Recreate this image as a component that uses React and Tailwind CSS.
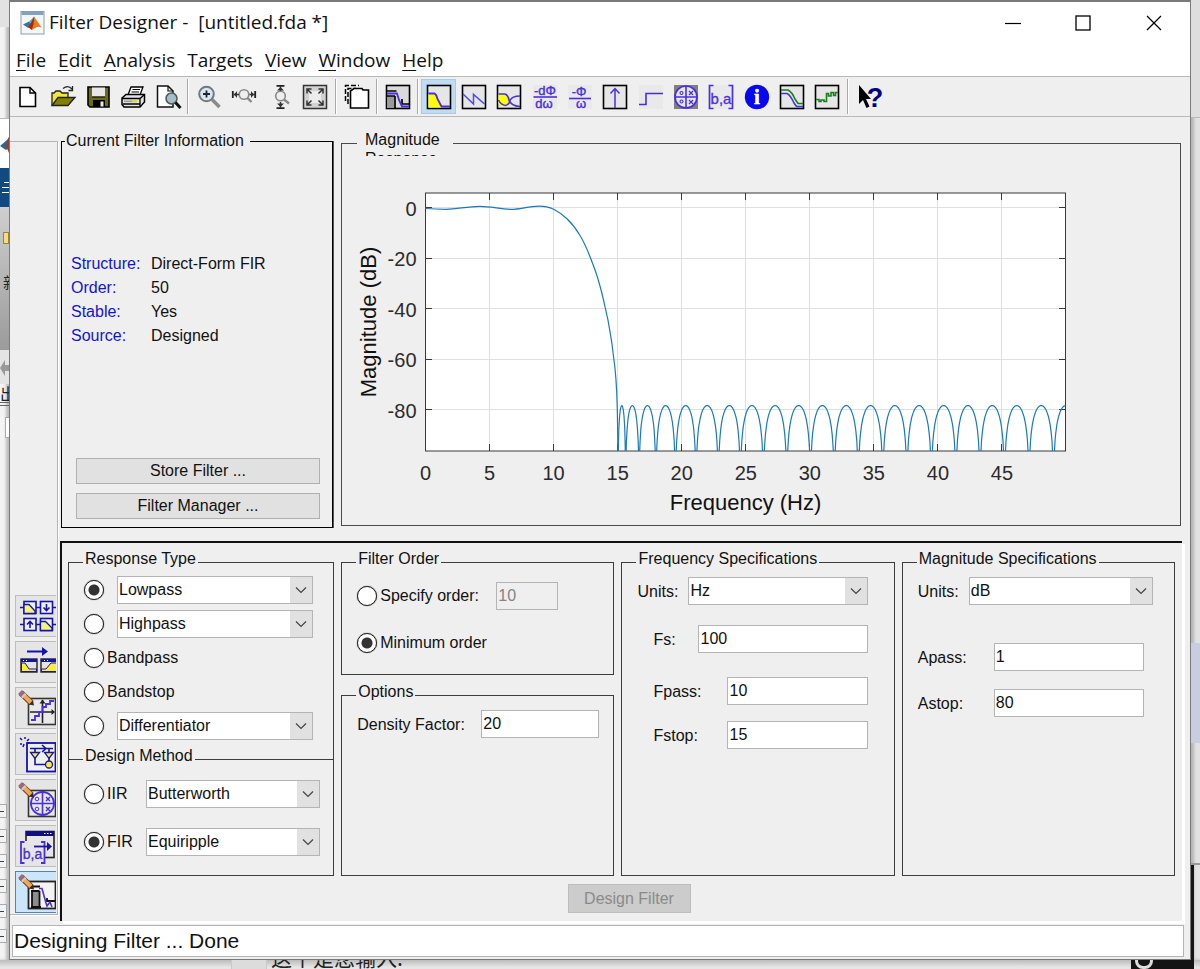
import React from "react";

const UI = 'font-["Liberation_Sans",Arial,sans-serif]';

/* ---------- shared controls ---------- */

function Select({ label, options, className = "" }) {
  return (
    <span className={"relative block h-[28px] " + className}>
      <select
        aria-label={label}
        className="block h-full w-full appearance-none border border-[#b4b4b4] bg-white pl-px text-base leading-5 text-[#111] outline-none"
      >
        {options.map((o) => (
          <option key={o}>{o}</option>
        ))}
      </select>
      <span className="pointer-events-none absolute inset-y-px right-px flex w-[22px] items-center justify-center bg-[#e1e1e1]">
        <svg width="12" height="8" viewBox="0 0 12 8" fill="none" stroke="#444" strokeWidth="1.2">
          <path d="M1 1.5L6 6.5L11 1.5" />
        </svg>
      </span>
    </span>
  );
}

function Radio({ name, id, label, checked }) {
  return (
    <input
      type="radio"
      name={name}
      id={id}
      aria-label={label}
      defaultChecked={checked}
      className="size-5 shrink-0 appearance-none rounded-full border border-[#222] bg-white shadow-[0_0_1px_#333] checked:bg-[radial-gradient(circle,#333_5px,#fff_6px)]"
    />
  );
}

function TextBox({ id, value, disabled, className = "" }) {
  return (
    <input
      id={id}
      type="text"
      defaultValue={value}
      disabled={disabled}
      className={
        "block h-[28px] min-w-0 border border-[#b4b4b4] bg-white pl-px text-base leading-5 text-[#111] outline-none disabled:bg-[#efefef] disabled:text-[#838383] " +
        className
      }
    />
  );
}

function Group({ title, className = "", children }) {
  return (
    <fieldset className={"min-w-0 border border-[#3c3c3c] pl-[15px] " + className}>
      <legend className="-ml-px px-[2px] pb-[6px] text-base leading-4">{title}</legend>
      {children}
    </fieldset>
  );
}

/* ---------- toolbar icons ---------- */

const P = "#4a2fe0";

function Icon({ children }) {
  return (
    <svg width="26" height="26" viewBox="0 0 26 26" fill="none" className="overflow-visible">
      {children}
    </svg>
  );
}

const Frame = ({ fill = "#e6e6e6" }) => (
  <rect x="1.5" y="1.5" width="23" height="23" fill={fill} stroke="#000" strokeWidth="1.6" />
);

const icons = {
  New: (
    <Icon>
      <path d="M5 3.5H15L20.5 9V22.5H5Z" fill="#fff" stroke="#000" strokeWidth="1.6" />
      <path d="M15 3.5V9H20.5" stroke="#000" strokeWidth="1.4" />
    </Icon>
  ),
  Open: (
    <Icon>
      <path d="M2 21V9H4L6 7H10L12 9H18V13" fill="#f3e53a" stroke="#222" strokeWidth="1.3" />
      <path d="M2 21.500L8 13.500H25L18 21.500Z" fill="#808000" stroke="#222" strokeWidth="1.3" />
      <path d="M13 4.500Q18 0.500 22 5M22.500 2V6.500H18.500" stroke="#222" strokeWidth="1.3" />
    </Icon>
  ),
  Save: (
    <Icon>
      <path d="M3 3H24V23H5L3 21Z" fill="#6b6b1a" stroke="#000" strokeWidth="1.6" />
      <rect x="7" y="3.500" width="13" height="9" fill="#e8e8e8" />
      <path d="M7 13H20" stroke="#000" />
      <rect x="8" y="16" width="12" height="7" fill="#000" />
      <rect x="15.500" y="17.500" width="3" height="5" fill="#e8e8e8" />
    </Icon>
  ),
  Print: (
    <Icon>
      <path d="M8 11L11 3H23L20 11" fill="#fff" stroke="#000" strokeWidth="1.3" />
      <path d="M12.500 5.500H20M11.500 8H19" stroke="#000" />
      <path d="M2 14L6 10.500H24.500V18L20 23H4L2 20.500Z" fill="#e4e4e4" stroke="#000" strokeWidth="1.5" />
      <path d="M2 14.500H20L24 11M20 14.500V22.500M3 20H20" stroke="#000" strokeWidth="1.3" />
      <path d="M4 17.300H12" stroke="#999" strokeWidth="1.500" />
      <path d="M12 17.300H17" stroke="#d9d933" strokeWidth="2" />
    </Icon>
  ),
  "Print Preview": (
    <Icon>
      <path d="M2.500 2H13L18 7V23H2.500Z" fill="#fff" stroke="#111" strokeWidth="1.5" />
      <path d="M13 2V7H18" stroke="#111" strokeWidth="1.200" />
      <circle cx="16.500" cy="14.500" r="5.500" fill="#9fc0c8" stroke="#555" strokeWidth="1.5" />
      <path d="M20.500 18.500L25.500 24" stroke="#111" strokeWidth="3" />
    </Icon>
  ),
  "Zoom In": (
    <Icon>
      <circle cx="10.500" cy="10" r="7.300" fill="#d9e6ef" stroke="#707880" strokeWidth="2" />
      <path d="M10.500 6.500V13.500M7 10H14" stroke="#223" strokeWidth="1.800" />
      <path d="M16 15.500L23.500 23" stroke="#8b8b8b" strokeWidth="3.500" />
    </Icon>
  ),
  "Zoom X": (
    <Icon>
      <circle cx="13" cy="10.500" r="4.800" fill="#eee" stroke="#888" strokeWidth="1.600" />
      <path d="M16.500 14L20.500 18" stroke="#888" strokeWidth="2.400" />
      <path d="M1.800 7V14M24.200 7V14" stroke="#222" strokeWidth="1.800" />
      <path d="M2.500 10.500H8M18.500 10.500H24" stroke="#333" strokeWidth="1.400" />
      <path d="M6 7V14L3 10.500ZM20 7V14L23 10.500Z" fill="#333" />
    </Icon>
  ),
  "Zoom Y": (
    <Icon>
      <circle cx="13.500" cy="12" r="4.800" fill="#eee" stroke="#888" strokeWidth="1.600" />
      <path d="M17 15.500L22 19.500" stroke="#888" strokeWidth="2.400" />
      <path d="M9.500 1.800H17.500M9.500 24.200H17.500" stroke="#222" strokeWidth="1.800" />
      <path d="M13.500 2V7M13.500 18V24" stroke="#333" strokeWidth="1.400" />
      <path d="M10 6.500H17L13.500 3ZM10 19.500H17L13.500 23Z" fill="#333" />
    </Icon>
  ),
  "Full View": (
    <Icon>
      <rect x="1.500" y="1.500" width="23" height="23" fill="#d2d2d2" stroke="#333" strokeWidth="1.500" />
      <rect x="7" y="7" width="12" height="12" fill="#ececec" />
      <path
        d="M5 9.500V5H9.500M5 5L9.500 9.500M16.500 5H21V9.500M21 5L16.500 9.500M5 16.500V21H9.500M5 21L9.500 16.500M21 16.500V21H16.500M21 21L16.500 16.500"
        stroke="#333"
        strokeWidth="1.500"
      />
    </Icon>
  ),
  "New Window": (
    <Icon>
      <path d="M1.500 17V1.500H15" stroke="#000" strokeWidth="1.500" strokeDasharray="5 2" />
      <path d="M4 20V4.500H12" stroke="#000" strokeWidth="1.500" strokeDasharray="5 2" />
      <path d="M6.500 7L10 4.500H18L19 6H24.500V24H6.500Z" fill="#fff" stroke="#000" strokeWidth="1.600" />
    </Icon>
  ),
  "Filter Specifications": (
    <Icon>
      <Frame fill="#dadada" />
      <path d="M2 12H9V24H2Z" fill="#9a9a9a" />
      <path d="M2 7H11.500M2 12H10M10 12V24M17 15V20H24" stroke="#000" strokeWidth="1.700" />
      <path d="M2 9.500H12L14 16L17 22.500H24" stroke={P} strokeWidth="1.800" />
    </Icon>
  ),
  "Magnitude Response": (
    <Icon>
      <Frame />
      <path d="M2.500 10H9L16 23.500H2.500Z" fill="#ffff00" />
      <path d="M2.500 9.500H8.500Q10.500 10.500 11.500 15L15.500 22.500H24" stroke={P} strokeWidth="1.800" />
    </Icon>
  ),
  "Phase Response": (
    <Icon>
      <Frame />
      <path d="M2 10L12.500 20V10.500L23.500 20" stroke="#4a4af0" strokeWidth="1.500" />
    </Icon>
  ),
  "Magnitude and Phase Responses": (
    <Icon>
      <Frame />
      <path d="M2.500 10H10Q14 16 14 20L10 22H5L2.500 20Z" fill="#ffff00" />
      <path d="M2.500 10H9Q12 11 13 16Q15 22 24 22.500" stroke={P} strokeWidth="1.700" />
      <path d="M2.500 16Q5 21 9.500 21.500Q13 21 14 16.500Q16 12 24 12" stroke={P} strokeWidth="1.500" />
    </Icon>
  ),
  "Group Delay": (
    <Icon>
      <rect x="1" y="1" width="24" height="24" fill="#e9e9e9" />
      <text x="13" y="10.500" textAnchor="middle" fontSize="13" fill={P} stroke={P} strokeWidth="0.4" fontFamily="Liberation Sans, sans-serif">-dΦ</text>
      <path d="M1.500 13H25" stroke={P} strokeWidth="1.600" />
      <text x="12" y="24" textAnchor="middle" fontSize="13" fill={P} stroke={P} strokeWidth="0.4" fontFamily="Liberation Sans, sans-serif">dω</text>
    </Icon>
  ),
  "Phase Delay": (
    <Icon>
      <rect x="1" y="1" width="24" height="24" fill="#e9e9e9" />
      <text x="12" y="12" textAnchor="middle" fontSize="13" fill={P} stroke={P} strokeWidth="0.4" fontFamily="Liberation Sans, sans-serif">-Φ</text>
      <path d="M2 14.500H24" stroke={P} strokeWidth="1.600" />
      <text x="14" y="23.500" textAnchor="middle" fontSize="13" fill={P} stroke={P} strokeWidth="0.4" fontFamily="Liberation Sans, sans-serif">ω</text>
    </Icon>
  ),
  "Impulse Response": (
    <Icon>
      <Frame />
      <path d="M13 24V5M8.500 9.500L13 4.500L17.500 9.500" stroke={P} strokeWidth="1.500" />
    </Icon>
  ),
  "Step Response": (
    <Icon>
      <rect x="1" y="1" width="24" height="24" fill="#e9e9e9" />
      <path d="M1 20.500H8V9.500H25" stroke={P} strokeWidth="1.600" />
    </Icon>
  ),
  "Pole-Zero Plot": (
    <Icon>
      <rect x="1" y="1" width="24" height="24" fill="#808080" />
      <circle cx="13" cy="13" r="11" fill="#e6e6e6" stroke={P} strokeWidth="1.700" />
      <path d="M13 2V24M2 13H24" stroke={P} strokeWidth="1.600" />
      <path d="M16 7L20 11M20 7L16 11M16 16L20 20M20 16L16 20" stroke={P} strokeWidth="1.200" />
      <circle cx="8.500" cy="9" r="1.500" stroke={P} strokeWidth="1.100" />
      <circle cx="8.500" cy="17.500" r="1.500" stroke={P} strokeWidth="1.100" />
    </Icon>
  ),
  "Filter Coefficients": (
    <Icon>
      <rect x="1" y="1" width="24" height="24" fill="#e9e9e9" />
      <path d="M5.500 1.500H1.500V24.500H5.500M20.500 1.500H24.500V24.500H20.500" stroke={P} strokeWidth="1.700" />
      <text x="13" y="20" textAnchor="middle" fontSize="15" fill={P} stroke={P} strokeWidth="0.300" fontFamily="Liberation Sans, sans-serif">b,a</text>
    </Icon>
  ),
  "Filter Information": (
    <Icon>
      <circle cx="13" cy="13" r="12.200" fill="#0808f0" />
      <text x="13" y="20" textAnchor="middle" fontSize="21" fontWeight="bold" fill="#fff" stroke="#fff" strokeWidth="0.500" fontFamily="Liberation Serif, serif">i</text>
    </Icon>
  ),
  "Magnitude Response Estimate": (
    <Icon>
      <Frame />
      <path d="M2 6H9Q13 8 16 15L19 19.500H24" stroke="#188018" strokeWidth="1.600" />
      <path d="M2 9.500H8Q11 10.500 15 19L17.500 22.500H24" stroke={P} strokeWidth="1.600" />
    </Icon>
  ),
  "Round-off Noise": (
    <Icon>
      <Frame />
      <path d="M2 15.500H5V17.500H7V16H10V17.500H12.500V9.500H14.500V12H17V8.500H19.500V11.500H21.500V8.500H24" stroke="#188018" strokeWidth="1.600" />
    </Icon>
  ),
  "What's This?": (
    <Icon>
      <path d="M2 1V20L6 16L9.500 24L12.500 22.500L9 15H14Z" fill="#000" />
      <text x="18" y="22.500" textAnchor="middle" fontSize="27" fontWeight="bold" fill="#000080" fontFamily="Liberation Sans, sans-serif">?</text>
    </Icon>
  ),
};

const toolGroups = [
  { width: "w-[175px]", names: ["New", "Open", "Save", "Print", "Print Preview"] },
  { width: "w-[142px]", names: ["Zoom In", "Zoom X", "Zoom Y", "Full View"] },
  { width: "w-[35px]", names: ["New Window"] },
  { width: "w-[35px]", names: ["Filter Specifications"] },
  {
    width: "w-[424px]",
    names: [
      "Magnitude Response",
      "Phase Response",
      "Magnitude and Phase Responses",
      "Group Delay",
      "Phase Delay",
      "Impulse Response",
      "Step Response",
      "Pole-Zero Plot",
      "Filter Coefficients",
      "Filter Information",
      "Magnitude Response Estimate",
      "Round-off Noise",
    ],
  },
  { width: "w-[38px]", names: ["What's This?"] },
];

function Toolbar() {
  return (
    <div className="flex h-[41px] items-stretch border-y border-[#b9b9b9] bg-[#efefef]">
      {toolGroups.map((g, i) => (
        <React.Fragment key={g.names[0]}>
          {i > 0 && <span className="mx-[2px] my-[2px] w-[2px] border-l border-r border-l-[#a9a9a9] border-r-white" />}
          <div className={"flex shrink-0 items-center " + g.width}>
            {g.names.map((n) => (
              <button
                key={n}
                type="button"
                title={n}
                className={
                  n === "Magnitude Response"
                    ? "flex h-[35px] flex-1 items-center justify-center bg-[#bfdcf3] outline -outline-offset-1 outline-[#a9cbe8]"
                    : "flex h-[35px] flex-1 items-center justify-center"
                }
              >
                {icons[n]}
              </button>
            ))}
          </div>
        </React.Fragment>
      ))}
    </div>
  );
}

/* ---------- sidebar icons ---------- */

const N = "#1414a8";

const Pencil = () => (
  <g>
    <path d="M6 6L16.500 16" stroke="#7b4a22" strokeWidth="6" />
    <path d="M7.500 7L16 15.500" stroke="#efa75a" strokeWidth="4" />
    <path d="M5 5L8 8" stroke="#9c6a72" strokeWidth="5.500" />
    <path d="M8 8L9.500 9.500" stroke="#c9c9d6" strokeWidth="5.500" />
    <path d="M14 17.500L19 18.500L18 13.500Z" fill="#3a2a1c" />
  </g>
);

const sideIcons = [
  {
    name: "Create a multirate filter",
    art: (
      <g strokeWidth="1.600" stroke={N}>
        <path d="M5 12.500H41M5 29.500H41" />
        <rect x="9" y="6.500" width="12" height="12" fill="#efefef" />
        <path d="M9 9.500H14L20 16V18.500H9Z" fill="#f6f27a" strokeWidth="1.300" />
        <rect x="25.500" y="6.500" width="12" height="12" fill="#efefef" />
        <path d="M31.500 9V15.500M28.500 12.500L31.500 15.500L34.500 12.500" />
        <rect x="9" y="23.500" width="12" height="12" fill="#efefef" />
        <path d="M15 33V26.500M12 29.500L15 26.500L18 29.500" />
        <rect x="25.500" y="23.500" width="12" height="12" fill="#efefef" />
        <path d="M25.500 26.500H30.500L37 33V35.500H25.500Z" fill="#f6f27a" strokeWidth="1.300" />
      </g>
    ),
  },
  {
    name: "Transform filter",
    art: (
      <g>
        <path d="M12 10.500H29" stroke={N} strokeWidth="2" />
        <path d="M27 6L33 10.500L27 15Z" fill={N} />
        <rect x="6" y="18" width="16" height="13" fill="#e4e4e4" stroke="#222" strokeWidth="1.400" />
        <path d="M6 18H22V21H6Z" fill={N} />
        <path d="M6.500 22H10L14 28H21.500V30.500H6.500Z" fill="#ffee33" stroke={N} />
        <rect x="26" y="18" width="16" height="13" fill="#e4e4e4" stroke="#222" strokeWidth="1.400" />
        <path d="M26 18H42V21H26Z" fill={N} />
        <path d="M26.500 28H31L36 22H42V30.500H26.500Z" fill="#ffee33" stroke={N} />
        <path d="M8 19.500H13M29 19.500H34" stroke="#fff" strokeDasharray="1 2" />
      </g>
    ),
  },
  {
    name: "Set quantization parameters",
    art: (
      <g>
        <rect x="13.500" y="11.500" width="27" height="26" fill="#e9e9e9" stroke="#333" strokeWidth="1.600" />
        <path d="M27.500 13V36M15 25H39" stroke="#222" strokeWidth="1.600" />
        <path d="M24.500 16.500L27.500 12.500L30.500 16.500ZM36.500 22V28L40 25Z" fill="#222" />
        <path d="M16 33H20V29H24V25H27.500V20H31V17H35V14H39" stroke={P} strokeWidth="1.800" />
        <Pencil />
      </g>
    ),
  },
  {
    name: "Realize model",
    art: (
      <g stroke={N}>
        <rect x="12" y="10" width="28.500" height="28.500" fill="#efefef" strokeWidth="1.800" />
        <path d="M15 15.500H38M20 15.500V31.500H31M34 15.500V28M27 12L31 15.500L27 19" strokeWidth="1.600" />
        <path d="M15.500 19.500H24.500L20 25.500ZM29.500 19.500H38.500L34 25.500Z" fill="#ffee33" strokeWidth="1.300" />
        <circle cx="34" cy="31.500" r="3.500" fill="#ffee33" strokeWidth="1.300" />
        <path d="M5 5L7 7M10 4V6M14 6L12 8M5 11H7M9 11L8 14M12 10H14" strokeWidth="1.500" />
      </g>
    ),
  },
  {
    name: "Pole-zero editor",
    art: (
      <g>
        <rect x="13.500" y="11.500" width="27" height="26" fill="#e9e9e9" stroke="#333" strokeWidth="1.600" />
        <g stroke={P}>
          <circle cx="27.500" cy="24.500" r="11.500" strokeWidth="1.800" />
          <path d="M27.500 12V37M15 24.500H40" strokeWidth="1.600" />
          <path d="M31 18L35 22M35 18L31 22M31 28L35 32M35 28L31 32" strokeWidth="1.400" />
          <circle cx="22" cy="20" r="1.800" />
          <circle cx="22" cy="30" r="1.800" />
        </g>
        <Pencil />
      </g>
    ),
  },
  {
    name: "Import filter",
    art: (
      <g>
        <rect x="11" y="6.500" width="28" height="26" fill="#e6e6e6" stroke="#222" strokeWidth="1.600" />
        <path d="M11 6H39V11H11Z" fill="#10107c" />
        <path d="M29 8.500H37" stroke="#fff" strokeDasharray="1.500 1.500" />
        <path d="M6 16H29V38H6Z" fill="#e6e6e6" />
        <path d="M9.500 17H6V38H9.500M26 17H29.500V38H26" stroke={P} strokeWidth="1.800" />
        <text x="17.500" y="34" textAnchor="middle" fontSize="14" fill={P} stroke={P} strokeWidth="0.300" fontFamily="Liberation Sans, sans-serif">b,a</text>
        <path d="M19 21.500H34" stroke={N} strokeWidth="1.800" />
        <path d="M32 17L37 21.500L32 26Z" fill={N} />
      </g>
    ),
  },
  {
    name: "Design filter",
    art: (
      <g>
        <rect x="13.500" y="10.500" width="27" height="27" fill="#f3f3f3" stroke="#222" strokeWidth="1.800" />
        <path d="M17 20H24V35H17Z" fill="#8c8c8c" />
        <path d="M16 15.500H25M24.500 20V36M17 20V36M16 20H24.500M32 27V30H40M16 36H26" stroke="#111" strokeWidth="1.800" />
        <path d="M24 17.500H27L31 32L32 35L35 31L37 36" stroke={P} strokeWidth="1.600" />
        <Pencil />
      </g>
    ),
  },
];

function Sidebar() {
  return (
    <nav className="mt-[24px] mb-[6px] flex w-[48px] shrink-0 flex-col justify-end gap-[4px] border-t border-r border-b border-[#b5b5b5] pb-px pl-[5px] shadow-[1px_1px_0_#fff]">
      {sideIcons.map((s, i) => (
        <button
          key={s.name}
          type="button"
          title={s.name}
          className={
            i === sideIcons.length - 1
              ? "block h-[42px] w-[41px] overflow-hidden border border-r-0 border-[#4d87b8] bg-[#cbe6fb]"
              : "block h-[42px] w-[41px] overflow-hidden border border-r-0 border-[#bdbdbd] bg-[#e5e5e5]"
          }
        >
          <svg width="42" height="42" viewBox="1 1 42 42" fill="none">
            {s.art}
          </svg>
        </button>
      ))}
    </nav>
  );
}

/* ---------- magnitude plot ---------- */

const nulls = [
  618, 625.6, 639, 655.9, 675.4, 696, 718.3, 740.4, 763.4, 786.8, 810.5, 834.2, 858.3, 882.8, 906.9, 931.4, 955.9, 980,
  1004.500, 1029, 1053.500, 1078,
];

function lobe(a, b) {
  const pts = [];
  for (let i = 0; i <= 40; i++) {
    const t = 0.04 + (0.92 * i) / 40;
    const x = a + (b - a) * t;
    const y = 405.6 - 2.53 * 20 * Math.log10(Math.sin(Math.PI * t));
    if (x <= 1065.500) pts.push(x.toFixed(1) + " " + Math.min(451, y).toFixed(1));
  }
  return "M" + pts.join("L");
}

const ripples = nulls.slice(1).map((b, i) => lobe(nulls[i], b)).join("");

const passband =
  "M425.5 208.500C432 209 440 209.300 446 209.300C458 209.300 466 206.300 480 206.300C492 206.300 500 209.300 511 209.300C521 209.300 528 206.200 539 206.200C546 206.200 550 207.500 553.700 209.200C559 212 563 215 566.700 218.500C571 222.500 576 228.500 580 235.500C584 242 587 249 590 256.700C593.500 265.500 596 272 598.300 280C601 289 603 297 605 306.700C607 315 608.700 323 610 331.700C611.500 340 612.500 347 613.300 355C614.700 364 615.500 372 616 380C616.700 390 617.100 400 617.300 409.700C617.600 425 617.900 440 618 451";

const xTicks = [0, 5, 10, 15, 20, 25, 30, 35, 40, 45];
const yTicks = [0, -20, -40, -60, -80];

function Plot() {
  return (
    <svg viewBox="342 156 838 369" className="block h-auto w-full" role="img" aria-label="Magnitude response">
      <rect x="425.5" y="193.500" width="640" height="257.500" fill="#fff" />
      <g stroke="#dfdfdf">
        {xTicks.slice(1).map((v) => {
          const x = Math.round(425 + v * 12.81) + 0.5;
          return <path key={v} d={`M${x} 193V451`} />;
        })}
        {yTicks.map((v) => {
          const y = Math.round(207 - v * 2.530) + 0.5;
          return <path key={v} d={`M425 ${y}H1065`} />;
        })}
      </g>
      <g stroke="#3a3a3a" fill="none">
        {xTicks.slice(1).map((v) => {
          const x = Math.round(425 + v * 12.81) + 0.5;
          return <path key={v} d={`M${x} 193V200M${x} 444V451`} />;
        })}
        {yTicks.map((v) => {
          const y = Math.round(207 - v * 2.530) + 0.5;
          return <path key={v} d={`M425 ${y}H432M1059 ${y}H1065`} />;
        })}
        <rect x="425.5" y="193" width="640" height="258" />
      </g>
      <path d={passband} fill="none" stroke="#1a79bd" strokeWidth="1.200" />
      <path d={ripples} fill="none" stroke="#1a79bd" strokeWidth="1.200" />
      <g fontFamily="Liberation Sans, Arial, sans-serif" fontSize="20" fill="#2b2b2b">
        {xTicks.map((v) => (
          <text key={v} x={425.5 + v * 12.81} y="480" textAnchor="middle">
            {v}
          </text>
        ))}
        {yTicks.map((v) => (
          <text key={v} x="416.500" y={215.500 - v * 2.530} textAnchor="end">
            {v}
          </text>
        ))}
      </g>
      <g fontFamily="Liberation Sans, Arial, sans-serif" fontSize="22" fill="#111">
        <text x="745.500" y="510" textAnchor="middle">
          Frequency (Hz)
        </text>
        <text transform="translate(375.5 322) rotate(-90)" textAnchor="middle">
          Magnitude (dB)
        </text>
      </g>
    </svg>
  );
}

/* ---------- panels ---------- */

const info = [
  ["Structure:", "Direct-Form FIR"],
  ["Order:", "50"],
  ["Stable:", "Yes"],
  ["Source:", "Designed"],
];

function PushButton({ children }) {
  return (
    <button type="button" className="h-[26px] w-full border border-[#b0b0b0] bg-[#e1e1e1] text-base leading-5">
      {children}
    </button>
  );
}

function TopPanels() {
  return (
    <div className="flex items-start gap-[8px] pt-[13px] pr-[9px] pl-px">
      <fieldset className="flex h-[398px] w-[272px] shrink-0 flex-col border border-black pr-[12px] pb-[8px] pl-[14px] shadow-[1px_0_0_#555]">
        <legend className="-ml-[11px] pr-[6px] pl-px text-base leading-[22px]">Current Filter Information</legend>
        <dl className="mt-[100px] -ml-[5px] grid grid-cols-[80px_1fr] text-base leading-[24px]">
          {info.map(([k, v]) => (
            <React.Fragment key={k}>
              <dt className="text-[#1414d2]">{k}</dt>
              <dd>{v}</dd>
            </React.Fragment>
          ))}
        </dl>
        <div className="mt-auto flex flex-col gap-[9px]">
          <PushButton>Store Filter ...</PushButton>
          <PushButton>Filter Manager ...</PushButton>
        </div>
      </fieldset>
      <fieldset className="min-w-0 flex-1 border border-[#4a4a4a]">
        <legend className="ml-[15px] h-[26px] w-[96px] overflow-hidden px-[8px] text-base leading-[19px]">
          Magnitude Response
        </legend>
        <Plot />
      </fieldset>
    </div>
  );
}

function ResponseColumn() {
  return (
    <div className="flex flex-col">
      <Group title="Response Type" className="border-b-0 pb-[16px]">
        {[
          ["Lowpass", true, ["Lowpass", "Raised-cosine"]],
          ["Highpass", false, ["Highpass", "Halfband Highpass"]],
          ["Bandpass", false, null],
          ["Bandstop", false, null],
          ["Differentiator", false, ["Differentiator", "Multiband", "Hilbert Transformer"]],
        ].map(([name, on, options]) => (
          <div key={name} className="flex h-[34px] items-center">
            <Radio name="response" id={"rt-" + name} label={name} checked={on} />
            {options ? (
              <Select label={name + " type"} options={options} className="ml-[13px] w-[196px]" />
            ) : (
              <label htmlFor={"rt-" + name} className="pl-[3px] text-base leading-5">
                {name}
              </label>
            )}
          </div>
        ))}
      </Group>
      <Group title="Design Method" className="-mt-[11px] flex-1">
        {[
          ["IIR", false, ["Butterworth", "Chebyshev Type I", "Elliptic"]],
          ["FIR", true, ["Equiripple", "Least-squares", "Window"]],
        ].map(([name, on, options]) => (
          <div key={name} className="flex h-[48px] items-center">
            <Radio name="method" id={"dm-" + name} label={name} checked={on} />
            <label htmlFor={"dm-" + name} className="w-[42px] pl-[3px] text-base leading-5">
              {name}
            </label>
            <Select label={name + " method"} options={options} className="w-[174px]" />
          </div>
        ))}
      </Group>
    </div>
  );
}

function OrderColumn() {
  return (
    <div className="flex flex-col gap-[9px]">
      <Group title="Filter Order" className="h-[124px]">
        <div className="flex h-[46px] items-center">
          <Radio name="order" id="specify" checked={false} />
          <label htmlFor="specify" className="w-[119px] pl-[3px] text-base leading-5">
            Specify order:
          </label>
          <TextBox id="order-value" value="10" disabled className="w-[62px]" />
        </div>
        <div className="flex h-[48px] items-center">
          <Radio name="order" id="minimum" checked />
          <label htmlFor="minimum" className="pl-[3px] text-base leading-5">
            Minimum order
          </label>
        </div>
      </Group>
      <Group title="Options" className="flex-1">
        <div className="flex h-[36px] items-center">
          <label htmlFor="density" className="w-[124px] pt-[2px] text-base leading-5">
            Density Factor:
          </label>
          <TextBox id="density" value="20" className="w-[118px]" />
        </div>
      </Group>
    </div>
  );
}

function FieldRow({ label, id, value, labelClass, boxClass, className = "" }) {
  return (
    <div className={"flex items-center " + className}>
      <label htmlFor={id} className={"shrink-0 pt-[2px] text-base leading-5 " + labelClass}>
        {label}
      </label>
      <TextBox id={id} value={value} className={boxClass} />
    </div>
  );
}

function BottomPanel() {
  return (
    <div className="mt-[13px] mr-[8px] flex flex-1 flex-col border-t-2 border-l-2 border-[#111] bg-[#efefef] shadow-[3px_3px_0_#fff]">
      <div className="grid flex-1 grid-cols-[266fr_273fr_273fr_273fr] gap-[7px] pt-[8px] pr-[7px] pl-[6px]">
        <ResponseColumn />
        <OrderColumn />
        <Group title="Frequency Specifications">
          <div className="flex h-[36px] items-center">
            <span className="w-[51px] pt-[2px] text-base leading-5">Units:</span>
            <Select label="Frequency units" options={["Hz", "kHz", "MHz", "Normalized (0 to 1)"]} className="w-[180px]" />
          </div>
          <FieldRow label="Fs:" id="fs" value="100" className="mt-[16px] pl-[16px]" labelClass="w-[45px]" boxClass="w-[170px]" />
          <FieldRow label="Fpass:" id="fpass" value="10" className="mt-[24px] pl-[16px]" labelClass="w-[74px]" boxClass="w-[141px]" />
          <FieldRow label="Fstop:" id="fstop" value="15" className="mt-[16px] pl-[16px]" labelClass="w-[74px]" boxClass="w-[141px]" />
        </Group>
        <Group title="Magnitude Specifications">
          <div className="flex h-[36px] items-center">
            <span className="w-[51px] pt-[2px] text-base leading-5">Units:</span>
            <Select label="Magnitude units" options={["dB", "Linear"]} className="w-[184px]" />
          </div>
          <FieldRow label="Apass:" id="apass" value="1" className="mt-[34px]" labelClass="w-[76px]" boxClass="w-[150px]" />
          <FieldRow label="Astop:" id="astop" value="80" className="mt-[18px]" labelClass="w-[76px]" boxClass="w-[150px]" />
        </Group>
      </div>
      <div className="flex justify-center pt-[8px] pb-[8px] pl-[14px]">
        <button
          type="button"
          disabled
          className="h-[29px] w-[123px] border border-[#bdbdbd] bg-[#cccccc] text-base leading-5 text-[#8a8a8a]"
        >
          Design Filter
        </button>
      </div>
    </div>
  );
}

/* ---------- desktop behind the window ---------- */

function LeftBackdrop() {
  return (
    <div aria-hidden="true" className="flex w-[9px] shrink-0 flex-col overflow-hidden bg-[#f4f4f4] shadow-[inset_-3px_0_3px_#bbb]">
      <div className="h-[27px] bg-[#e2e2e2]" />
      <div className="h-[92px] border-b border-[#bbb]" />
      <div className="flex h-[49px] items-center bg-white">
        <svg width="9" height="22" viewBox="0 0 9 22">
          <path d="M0 13L7 7L9 4V15L6 17Z" fill="#27659b" />
          <path d="M6 13L9 4V20Z" fill="#a33a1c" />
        </svg>
      </div>
      <div className="flex h-[39px] flex-col items-end justify-center gap-[4px] bg-[#114a80]">
        <span className="h-px w-[5px] bg-white" />
        <span className="h-px w-[7px] bg-white" />
        <span className="h-px w-[7px] bg-white" />
      </div>
      <div className="h-[143px] bg-linear-to-b from-[#cfcfcf] to-[#9b9b9b] pt-[25px]">
        <div className="ml-[3px] h-[12px] w-[6px] border border-[#9c8530] bg-[#f2dc8c]" />
        <div className="mt-[28px] ml-[3px] w-[16px] font-['Noto_Sans_CJK_SC',sans-serif] text-base leading-5 text-[#222]">新</div>
      </div>
      <div className="h-[34px] bg-[#e4e4e4] pt-[10px]">
        <svg width="9" height="16" viewBox="0 0 9 16">
          <path d="M0 8L5 0V5H9V11H5V16Z" fill="#999" />
        </svg>
      </div>
      <div className="h-[18px] overflow-hidden font-['Noto_Sans_CJK_SC',sans-serif] text-base leading-[18px] text-[#222]">出</div>
      <div className="h-[4px] border-y border-[#666]" />
      <div className="mt-[11px] ml-[5px] h-[21px] w-[6px] border border-[#aaa] bg-white" />
      <div className="mt-auto flex flex-col gap-[11px] pb-[17px]">
        {[0, 1, 2, 3, 4, 5].map((n) => (
          <span key={n} className="flex h-[14px] w-[7px] items-center border border-l-0 border-[#aaa] bg-[#f3f3f3]">
            <span className="h-px w-[4px] bg-[#345]" />
          </span>
        ))}
      </div>
    </div>
  );
}

function RightBackdrop() {
  return (
    <div aria-hidden="true" className="flex w-[9px] shrink-0 flex-col bg-[#e2e2e2] shadow-[inset_3px_0_3px_#b5b5b5]">
      <div className="h-[118px] border-b border-[#bbb] bg-[#dedede]" />
      <div className="h-[525px]" />
      <div className="h-[100px] bg-[#c9cde0]" />
      <div className="h-[122px] border-b-2 border-[#999]" />
      <div className="w-[3px] flex-1 bg-[#141414]" />
    </div>
  );
}

function BottomBackdrop() {
  return (
    <div aria-hidden="true" className="flex h-[9px] shrink-0 overflow-hidden bg-[#e6e6e6] bg-linear-to-b from-[#bcbcbc] to-[#e6e6e6] to-80%">
      <div className="w-[231px]" />
      <div className="w-[36px] border-x border-[#c9c9c9] bg-[#dcdcdc]" />
      <div className="flex flex-1 items-end pl-[4px]">
        <span className="pb-[3px] font-['Noto_Sans_CJK_SC',sans-serif] text-[21px] leading-[18px] text-[#222]">这个是您输入:</span>
      </div>
      <div className="flex w-[63px] items-end justify-start bg-[#141414] pl-[4px]">
        <span className="h-[16px] w-[18px] rounded-full border-[3px] border-[#ddd]" />
      </div>
      <div className="w-[6px]" />
    </div>
  );
}

/* ---------- window chrome ---------- */

const menus = [
  ["", "F", "ile"],
  ["", "E", "dit"],
  ["", "A", "nalysis"],
  ["Ta", "r", "gets"],
  ["", "V", "iew"],
  ["", "W", "indow"],
  ["", "H", "elp"],
];

function TitleBar() {
  return (
    <header className="flex h-[41px] items-center bg-white pl-[10px]">
      <svg width="25" height="25" viewBox="0 0 25 25" className="shrink-0">
        <rect x="1" y="1.500" width="23" height="22.500" fill="#f3f7fa" stroke="#8c9eae" />
        <rect x="1.500" y="2" width="22" height="3" fill="#7fa3c4" />
        <path d="M3 14.500L9 11.500L11.500 14L7.500 17.500Z" fill="#2f78a8" />
        <path d="M9 11.500Q12 9 14 6.500L11.500 14Z" fill="#5ab0c0" />
        <path d="M14 6.500Q11.500 13 7.500 17.500Q9.500 17 11.500 20Q14 18 15.500 16Z" fill="#a82a10" />
        <path d="M14 6.500Q17 11 22 18Q18.500 16 16 17.500Q13.500 19 11.500 20Q14.500 14 14 6.500Z" fill="#ea7a1c" />
      </svg>
      <h1 className="pb-px pl-[4px] font-['Open_Sans','Segoe_UI',sans-serif] text-[19px] leading-6 whitespace-pre text-[#111]">
        {"Filter Designer -  [untitled.fda *]"}
      </h1>
      <div className="ml-auto flex">
        <button type="button" aria-label="Minimize" className="flex h-[41px] w-[70px] items-center justify-center">
          <svg width="18" height="18" viewBox="0 0 18 18">
            <path d="M1 9.500H17" stroke="#000" strokeWidth="1.200" />
          </svg>
        </button>
        <button type="button" aria-label="Maximize" className="flex h-[41px] w-[70px] items-center justify-center">
          <svg width="18" height="18" viewBox="0 0 18 18">
            <rect x="2" y="2" width="14" height="14" fill="none" stroke="#000" strokeWidth="1.300" />
          </svg>
        </button>
        <button type="button" aria-label="Close" className="flex h-[41px] w-[72px] items-center justify-center">
          <svg width="18" height="18" viewBox="0 0 18 18">
            <path d="M2 2L16 16M16 2L2 16" stroke="#000" strokeWidth="1.300" />
          </svg>
        </button>
      </div>
    </header>
  );
}

export default function App() {
  return (
    <div className={"flex min-h-screen flex-col bg-[#e6e6e6] text-[#111] " + UI}>
      <div className="flex flex-1">
        <LeftBackdrop />
        <main className="flex min-w-0 flex-1 flex-col border border-t-2 border-[#7a7a7a] bg-[#efefef]">
          <TitleBar />
          <div className="flex h-[33px] items-center gap-[12px] bg-white pl-[6px] font-['Open_Sans','Segoe_UI',sans-serif] text-[19px] leading-6">
            {menus.map(([a, u, b]) => (
              <button key={a + u + b} type="button" className="underline-offset-[3px]">
                {a}
                <span className="underline decoration-1">{u}</span>
                {b}
              </button>
            ))}
          </div>
          <Toolbar />
          <div className="flex flex-1">
            <Sidebar />
            <div className="flex min-w-0 flex-1 flex-col pl-[2px]">
              <TopPanels />
              <BottomPanel />
            </div>
          </div>
          <output className="mt-[4px] mr-[6px] mb-[2px] ml-[2px] block h-[32px] border border-[#b5b5b5] bg-white pl-px text-[21px] leading-[29px]">
            Designing Filter ... Done
          </output>
        </main>
        <RightBackdrop />
      </div>
      <BottomBackdrop />
    </div>
  );
}
